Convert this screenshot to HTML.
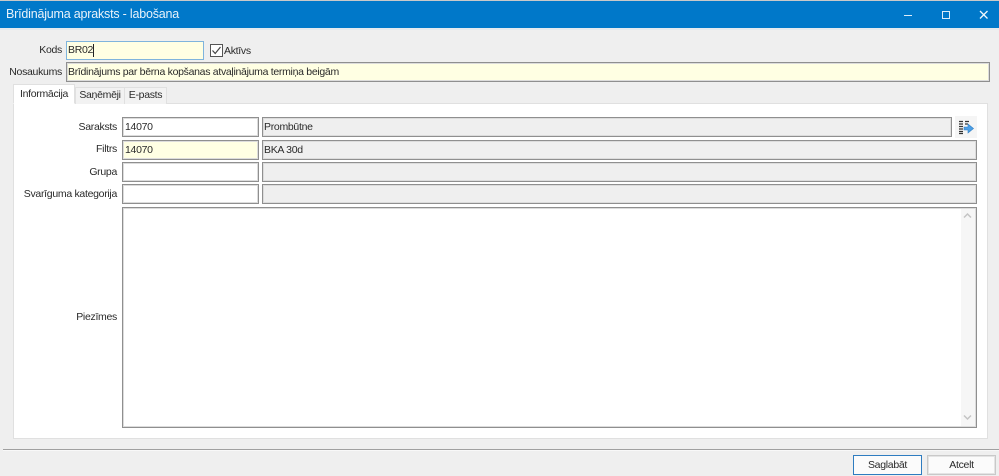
<!DOCTYPE html>
<html lang="lv">
<head>
<meta charset="utf-8">
<title>Brīdinājuma apraksts - labošana</title>
<style>
html,body{margin:0;padding:0;}
body{width:999px;height:476px;position:relative;overflow:hidden;background:#efefef;font-family:"Liberation Sans",sans-serif;font-size:10.5px;letter-spacing:-.3px;color:#2a2a2a;}
div,span{position:absolute;box-sizing:border-box;white-space:nowrap;}
.title{left:0;top:1px;width:999px;height:27px;background:#0078c9;}
.ttext{left:6px;top:7px;color:#e8f2fa;font-size:12.500px;letter-spacing:-.2px;line-height:15px;}
.lbl{text-align:right;line-height:14px;height:14px;}
.inp{border:1px solid #8f8f8f;box-shadow:inset 0 0 0 1px #dcdcdc;background:#fff;line-height:18px;padding-left:2px;}
.ro{background:#efefef;}
.y{background:#ffffe3;}
.tab{border:1px solid #e0e0e0;border-bottom:0;text-align:center;line-height:15px;}
.btn{top:455px;height:20px;border:1px solid #c9c9c9;box-shadow:inset 0 0 0 1px #e4e4e4;background:#fbfbfb;text-align:center;line-height:18px;}
</style>
</head>
<body>
<div style="left:0;top:0;width:999px;height:1px;background:#c9c9c9"></div>
<div class="title"></div>
<div class="ttext">Brīdinājuma apraksts - labošana</div>
<div style="left:904px;top:15px;width:8px;height:1px;background:#dcecf8"></div>
<div style="left:942px;top:11px;width:8px;height:8px;border:1.5px solid #dcecf8"></div>
<svg style="position:absolute;left:979px;top:10px" width="10" height="10" viewBox="0 0 10 10"><path d="M1 1L8.500 8.500M8.500 1L1 8.500" stroke="#f2f8fc" stroke-width="1.300" fill="none"/></svg>
<div style="left:0;top:28px;width:999px;height:2px;background:#e4eaef"></div>

<div class="lbl" style="left:0;width:62px;top:43px">Kods</div>
<div class="inp y" style="left:66px;top:41px;width:138px;height:19px;border-color:#7fb4dd;box-shadow:none;line-height:17px;padding-left:1px">BR02<span style="left:26px;top:2px;width:1px;height:13px;background:#222"></span></div>
<div style="left:210px;top:44px;width:13px;height:13px;border:1px solid #555;background:#fff"></div>
<svg style="position:absolute;left:210px;top:44px" width="13" height="13" viewBox="0 0 13 13"><path d="M2.500 6.500L5.200 9.500L10.500 3" stroke="#444" stroke-width="1.200" fill="none"/></svg>
<div class="lbl" style="left:224px;top:44px">Aktīvs</div>

<div class="lbl" style="left:0;width:62px;top:65px">Nosaukums</div>
<div class="inp y" style="left:66px;top:62px;width:924px;height:20px;padding-left:1px">Brīdinājums par bērna kopšanas atvaļinājuma termiņa beigām</div>

<div style="left:13px;top:103px;width:975px;height:336px;background:#fff;border:1px solid #e0e0e0"></div>
<div class="tab" style="left:75px;top:87px;width:50px;height:17px;background:#f2f2f2;">Saņēmēji</div>
<div class="tab" style="left:124px;top:87px;width:43px;height:17px;background:#f2f2f2;">E-pasts</div>
<div class="tab" style="left:13px;top:84px;width:62px;height:20px;background:#fff;line-height:18px;border-bottom:1px solid #fff">Informācija</div>

<div class="lbl" style="left:0;width:117px;top:120px">Saraksts</div>
<div class="inp" style="left:122px;top:117px;width:137px;height:20px">14070</div>
<div class="inp ro" style="left:262px;top:117px;width:690px;height:20px;padding-left:1px">Prombūtne</div>
<div style="left:955px;top:116px;width:22px;height:22px;background:#f5f5f5"></div>
<svg style="position:absolute;left:957px;top:120px" width="18" height="15" viewBox="0 0 18 15"><path d="M2 1.500h4M8 1.500h4M2 4h4M8 4h3M2 6.500h4M2 9h4M2 11.500h4M2 13.500h4" stroke="#333" stroke-width="1.300" fill="none"/><path d="M7 7h4V4L16.500 8.500L11 13V10H7Z" fill="#4c9fe6" stroke="#2f7fc4" stroke-width=".6"/></svg>

<div class="lbl" style="left:0;width:117px;top:142px">Filtrs</div>
<div class="inp y" style="left:122px;top:140px;width:137px;height:20px">14070</div>
<div class="inp ro" style="left:262px;top:140px;width:715px;height:20px;padding-left:1px">BKA 30d</div>

<div class="lbl" style="left:0;width:117px;top:165px">Grupa</div>
<div class="inp" style="left:122px;top:162px;width:137px;height:20px"></div>
<div class="inp ro" style="left:262px;top:162px;width:715px;height:20px"></div>

<div class="lbl" style="left:0;width:117px;top:187px">Svarīguma kategorija</div>
<div class="inp" style="left:122px;top:184px;width:137px;height:20px"></div>
<div class="inp ro" style="left:262px;top:184px;width:715px;height:20px"></div>

<div class="lbl" style="left:0;width:117px;top:310px">Piezīmes</div>
<div class="inp" style="left:122px;top:207px;width:855px;height:221px"></div>
<div style="left:961px;top:209px;width:14px;height:217px;background:#f6f6f6"></div>
<svg style="position:absolute;left:962px;top:211px" width="11" height="9" viewBox="0 0 11 9"><path d="M2 6.500L5.500 3L9 6.500" stroke="#c4c4c4" stroke-width="1.500" fill="none"/></svg>
<svg style="position:absolute;left:962px;top:413px" width="11" height="9" viewBox="0 0 11 9"><path d="M2 2.500L5.500 6L9 2.500" stroke="#c4c4c4" stroke-width="1.500" fill="none"/></svg>

<div style="left:3px;top:449px;width:996px;height:1px;background:#a0a0a0"></div>
<div style="left:3px;top:450px;width:996px;height:1px;background:#f8f8f8"></div>
<div class="btn" style="left:853px;width:69px;border-color:#2e7cc0;box-shadow:none">Saglabāt</div>
<div class="btn" style="left:927px;width:69px">Atcelt</div>
</body>
</html>
